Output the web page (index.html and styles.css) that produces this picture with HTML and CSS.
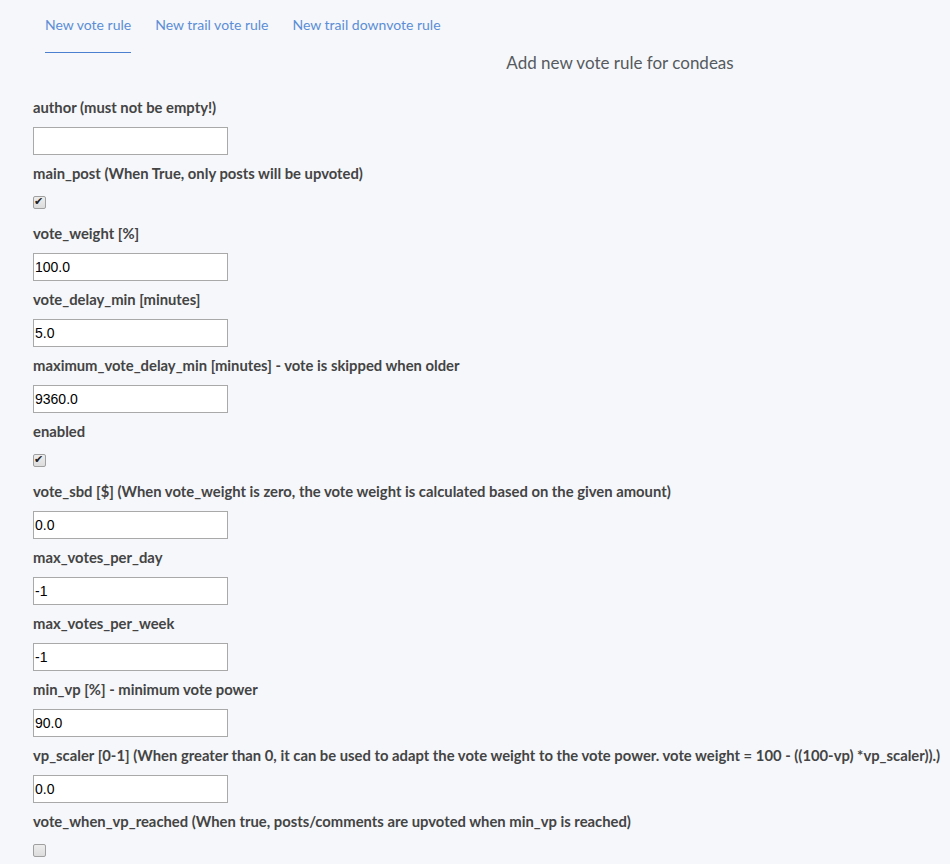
FILE: index.html
```html
<!DOCTYPE html>
<html>
<head>
<meta charset="utf-8">
<link rel="stylesheet" href="styles.css">
</head>
<body>
<nav class="tabs">
  <a class="tab active">New vote rule</a>
  <a class="tab">New trail vote rule</a>
  <a class="tab">New trail downvote rule</a>
</nav>
<h2 class="title">Add new vote rule for condeas</h2>
<form class="form">
  <div class="field"><label class="lbl">author (must not be empty!)</label><input class="inp" type="text" value=""></div>
  <div class="field check"><label class="lbl">main_post (When True, only posts will be upvoted)</label><input class="cb" type="checkbox" checked></div>
  <div class="field"><label class="lbl">vote_weight [%]</label><input class="inp" type="text" value="100.0"></div>
  <div class="field"><label class="lbl">vote_delay_min [minutes]</label><input class="inp" type="text" value="5.0"></div>
  <div class="field"><label class="lbl">maximum_vote_delay_min [minutes] - vote is skipped when older</label><input class="inp" type="text" value="9360.0"></div>
  <div class="field check"><label class="lbl">enabled</label><input class="cb" type="checkbox" checked></div>
  <div class="field"><label class="lbl">vote_sbd [$] (When vote_weight is zero, the vote weight is calculated based on the given amount)</label><input class="inp" type="text" value="0.0"></div>
  <div class="field"><label class="lbl">max_votes_per_day</label><input class="inp" type="text" value="-1"></div>
  <div class="field"><label class="lbl">max_votes_per_week</label><input class="inp" type="text" value="-1"></div>
  <div class="field"><label class="lbl">min_vp [%] - minimum vote power</label><input class="inp" type="text" value="90.0"></div>
  <div class="field"><label class="lbl">vp_scaler [0-1] (When greater than 0, it can be used to adapt the vote weight to the vote power. vote weight = 100 - ((100-vp) *vp_scaler)).)</label><input class="inp" type="text" value="0.0"></div>
  <div class="field check"><label class="lbl">vote_when_vp_reached (When true, posts/comments are upvoted when min_vp is reached)</label><input class="cb" type="checkbox"></div>
</form>
</body>
</html>
```

FILE: styles.css
```css
html, body {
  margin: 0;
  padding: 0;
  background: #f5f7fa;
  font-family: "Lato", "Liberation Sans", sans-serif;
}
.tabs {
  display: flex;
  gap: 24px;
  padding: 15px 0 0 45px;
  height: 38px;
}
.tab {
  color: #5b8ed6;
  font-size: 14px;
  line-height: 20px;
  height: 38px;
  box-sizing: border-box;
  cursor: pointer;
}
.tab.active {
  border-bottom: 1px solid #4a80cf;
}
.title {
  margin: 0;
  padding-left: 290px;
  text-align: center;
  font-weight: normal;
  font-size: 17px;
  line-height: 20px;
  color: #555a60;
}
.form {
  padding: 24px 0 0 33px;
  display: flex;
  flex-direction: column;
}
.field {
  display: flex;
  flex-direction: column;
  align-items: flex-start;
  padding-bottom: 8px;
}
.lbl {
  font-weight: bold;
  font-size: 14.8px;
  line-height: 20px;
  color: #444;
  margin-bottom: 10px;
  white-space: nowrap;
}
.inp {
  width: 195px;
  height: 28px;
  box-sizing: border-box;
  border: 1px solid #a9a9a9;
  background: #fff;
  padding: 1px;
  margin: 0;
  font-family: "Liberation Sans", Arial, sans-serif;
  font-size: 14px;
  color: #000;
}
.check .lbl {
  margin-bottom: 13px;
}
.cb {
  appearance: none;
  -webkit-appearance: none;
  position: relative;
  width: 13px;
  height: 13px;
  margin: 0 0 6px 0;
  border: 1px solid #a0a0a0;
  border-radius: 2px;
  background: linear-gradient(#ededed, #dcdcdc);
  box-sizing: border-box;
}
.cb:checked::after {
  content: "\2714";
  position: absolute;
  left: 0px;
  top: -2px;
  font-size: 11px;
  line-height: 14px;
  color: #222;
  font-family: "DejaVu Sans", sans-serif;
}
```
